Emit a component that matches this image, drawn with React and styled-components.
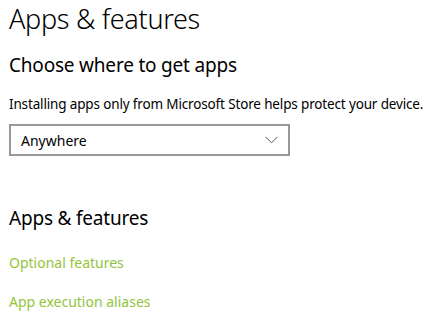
import React from 'react';
import styled, { createGlobalStyle } from 'styled-components';

const GlobalStyle = createGlobalStyle`
  html, body {
    margin: 0;
    padding: 0;
    background: #ffffff;
  }
  body {
    font-family: "Noto Sans", "Open Sans", sans-serif;
    color: #000000;
    overflow: hidden;
  }
`;

const Page = styled.div`
  width: 437px;
  height: 327px;
  padding: 0 9px;
  box-sizing: border-box;
  display: flex;
  flex-direction: column;
`;

const Title = styled.h1`
  margin: 0;
  font-size: 27px;
  font-weight: 300;
  line-height: 38px;
  letter-spacing: -0.3px;
`;

const SectionTitle = styled.h2`
  margin: ${(props) => props.$top}px 0 0;
  font-size: 19px;
  font-weight: 400;
  line-height: 28px;
  letter-spacing: -0.2px;
`;

const Description = styled.p`
  margin: 15px 0 0;
  font-size: 13.5px;
  line-height: 20px;
  letter-spacing: -0.15px;
`;

const Select = styled.div`
  margin-top: 10px;
  width: 281px;
  height: 32px;
  box-sizing: border-box;
  border: 2px solid #999999;
  display: flex;
  align-items: center;
  justify-content: space-between;
  padding: 0 10px 0 10px;
  font-size: 14px;
`;

const Chevron = styled.svg`
  width: 13px;
  height: 8px;
`;

const Link = styled.a`
  margin-top: ${(props) => props.$top}px;
  font-size: 14px;
  line-height: 20px;
  color: #92c53a;
  text-decoration: none;
  align-self: flex-start;
`;

export default function App() {
  return (
    <>
      <GlobalStyle />
      <Page>
        <Title>Apps &amp; features</Title>
        <SectionTitle $top={13}>Choose where to get apps</SectionTitle>
        <Description>
          Installing apps only from Microsoft Store helps protect your device.
        </Description>
        <Select>
          <span>Anywhere</span>
          <Chevron viewBox="0 0 13 8">
            <path d="M0.5 0.8 L6.5 6.8 L12.5 0.8" fill="none" stroke="#555" strokeWidth="1" />
          </Chevron>
        </Select>
        <SectionTitle $top={48}>Apps &amp; features</SectionTitle>
        <Link $top={21} href="#">Optional features</Link>
        <Link $top={19} href="#">App execution aliases</Link>
      </Page>
    </>
  );
}
